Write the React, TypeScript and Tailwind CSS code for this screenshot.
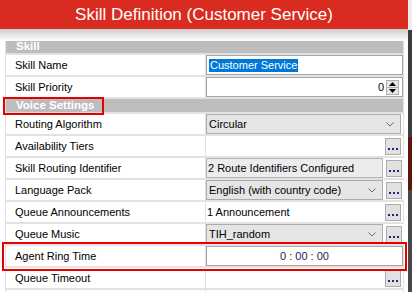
import React from 'react'

const font = { fontFamily: '"Liberation Sans", Arial, sans-serif' }

function Dots() {
  return (
    <div className="w-[16px] h-[17px] shrink-0 bg-[#e1e1e1] border border-[#adadad] flex items-end justify-center gap-[2px] pb-[4px]">
      <span className="w-[2px] h-[2px] bg-[#22228a]" />
      <span className="w-[2px] h-[2px] bg-[#22228a]" />
      <span className="w-[2px] h-[2px] bg-[#22228a]" />
    </div>
  )
}

function Chevron() {
  return (
    <svg width="8" height="5" viewBox="0 0 8 5" className="shrink-0">
      <path d="M0.5 0.5 L4 4 L7.5 0.5" fill="none" stroke="#6b6b6b" strokeWidth="1" />
    </svg>
  )
}

function Select({ value, withButton }: { value: string; withButton?: boolean }) {
  return (
    <div className="flex items-center gap-[3px] w-full h-full pr-[2px]">
      <div className={`${withButton ? 'w-[177px]' : 'flex-1'} h-full bg-[#e5e5e5] border border-[#acacac] flex items-center justify-between pl-[2px] pr-[6px]`}>
        <span>{value}</span>
        <Chevron />
      </div>
      {withButton && <Dots />}
    </div>
  )
}

function SectionHeader({ title, h }: { title: string; h: string }) {
  return (
    <div className={`${h} bg-[#bdbdbd] text-white font-bold text-[11.5px] pl-[10px] flex items-center leading-none`}>
      {title}
    </div>
  )
}

function Row({ label, children }: { label: string; children?: React.ReactNode }) {
  return (
    <div className="grid grid-cols-[199px_1fr] gap-x-[1px] h-[20px] shrink-0">
      <div className="bg-white pl-[9px] flex items-center">{label}</div>
      <div className="bg-white flex items-center">{children}</div>
    </div>
  )
}

export default function App() {
  return (
    <div className="relative flex w-[412px] h-[292px] overflow-hidden bg-white text-[11px] text-black" style={font}>
      <div className="w-[408px] flex flex-col">
        <div className="h-[29px] shrink-0 bg-[#d92b20] text-white text-[17px] flex items-center justify-center">
          Skill Definition (Customer Service)
        </div>
        <div className="h-[12px] shrink-0 bg-gradient-to-b from-[#cdcdcd] to-white" />
        <div className="ml-[5px] w-[399px] bg-[#e2e2e2] px-[1px] flex flex-col gap-[2px]">
          <SectionHeader title="Skill" h="h-[12px]" />
          <Row label="Skill Name">
            <div className="w-full h-full border border-[#a5a5a5] flex items-center pl-[2px]">
              <span className="bg-[#0078d7] text-white leading-[13px] px-[1px]">Customer Service</span>
            </div>
          </Row>
          <Row label="Skill Priority">
            <div className="w-full h-full border border-[#a5a5a5] flex items-center justify-end pr-[3px] gap-[2px]">
              <span>0</span>
              <div className="w-[13px] h-[15px] flex flex-col">
                <div className="flex-1 bg-[#e6e6e6] border border-[#b0b0b0] flex items-center justify-center">
                  <svg width="7" height="4" viewBox="0 0 7 4"><path d="M0 4 L3.5 0 L7 4 Z" fill="#000" /></svg>
                </div>
                <div className="flex-1 bg-[#e6e6e6] border border-t-0 border-[#b0b0b0] flex items-center justify-center">
                  <svg width="7" height="4" viewBox="0 0 7 4"><path d="M0 0 L3.5 4 L7 0 Z" fill="#000" /></svg>
                </div>
              </div>
            </div>
          </Row>
          <SectionHeader title="Voice Settings" h="h-[13px]" />
          <Row label="Routing Algorithm">
            <Select value="Circular" />
          </Row>
          <Row label="Availability Tiers">
            <div className="w-full flex justify-end pr-[2px]">
              <Dots />
            </div>
          </Row>
          <Row label="Skill Routing Identifier">
            <div className="flex items-center gap-[3px] w-full h-full pr-[2px]">
              <div className="w-[177px] h-full bg-[#ececec] border border-[#b5b5b5] flex items-center pl-[1px]">
                2 Route Identifiers Configured
              </div>
              <Dots />
            </div>
          </Row>
          <Row label="Language Pack">
            <Select value="English (with country code)" withButton />
          </Row>
          <Row label="Queue Announcements">
            <div className="flex items-center justify-between w-full pl-[1px] pr-[2px]">
              <span>1 Announcement</span>
              <Dots />
            </div>
          </Row>
          <Row label="Queue Music">
            <Select value="TIH_random" withButton />
          </Row>
          <Row label="Agent Ring Time">
            <div className="w-full h-full border border-[#a5a5a5] flex items-center justify-center text-[#23235e]">
              0 : 00 : 00
            </div>
          </Row>
          <Row label="Queue Timeout">
            <div className="w-full flex justify-end pr-[2px]">
              <Dots />
            </div>
          </Row>
          <Row label="" />
        </div>
      </div>
      <div className="w-[4px] flex flex-col">
        <div className="h-[30px] bg-[#ececec]" />
        <div className="h-[107px] bg-[#3c3c3c]" />
        <div className="h-[53px] bg-[#5c1612]" />
        <div className="flex-1 bg-[#4a4640]" />
      </div>

      {/* red annotation boxes */}
      <div className="absolute left-[3px] top-[97px] w-[101px] h-[18px] border-2 border-[#e60000]" />
      <div className="absolute left-[2px] top-[242px] w-[405px] h-[29px] border-2 border-[#e60000]" />
    </div>
  )
}
